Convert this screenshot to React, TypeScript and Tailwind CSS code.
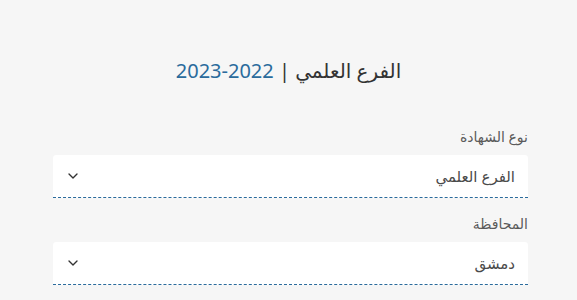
import { ChevronDown } from "lucide-react";

const fields = [
    { label: "نوع الشهادة", value: "الفرع العلمي" },
    { label: "المحافظة", value: "دمشق" },
];

export default function App() {
    return (
        <div dir="rtl" className="min-h-[300px] w-full bg-[#f6f6f6] text-[#333]" style={{ fontFamily: '"Noto Sans", "DejaVu Sans", sans-serif' }}>
            <div className="pt-[57px] pb-[42px] text-center text-[20px] leading-[28px] text-[#333]">
                الفرع العلمي | <span dir="ltr" className="text-[#2a6b9c]">2023-2022</span>
            </div>
            <div className="mr-[49px] ml-[53px] flex flex-col">
                {fields.map((field) => (
                    <div key={field.label} className="mb-[16px]">
                        <label className="block text-[14px] leading-[20px] text-[#5a5a5a] mb-[8px]">
                            {field.label}
                        </label>
                        <div className="flex items-center justify-between h-[43px] bg-white rounded-t-[3px] border-b border-dashed border-[#2a6b9c] pr-[13px] pl-[12px]">
                            <span className="text-[15px] text-[#4a4a4a]">{field.value}</span>
                            <ChevronDown size={16} strokeWidth={2} className="text-[#333]" />
                        </div>
                    </div>
                ))}
            </div>
        </div>
    );
}
